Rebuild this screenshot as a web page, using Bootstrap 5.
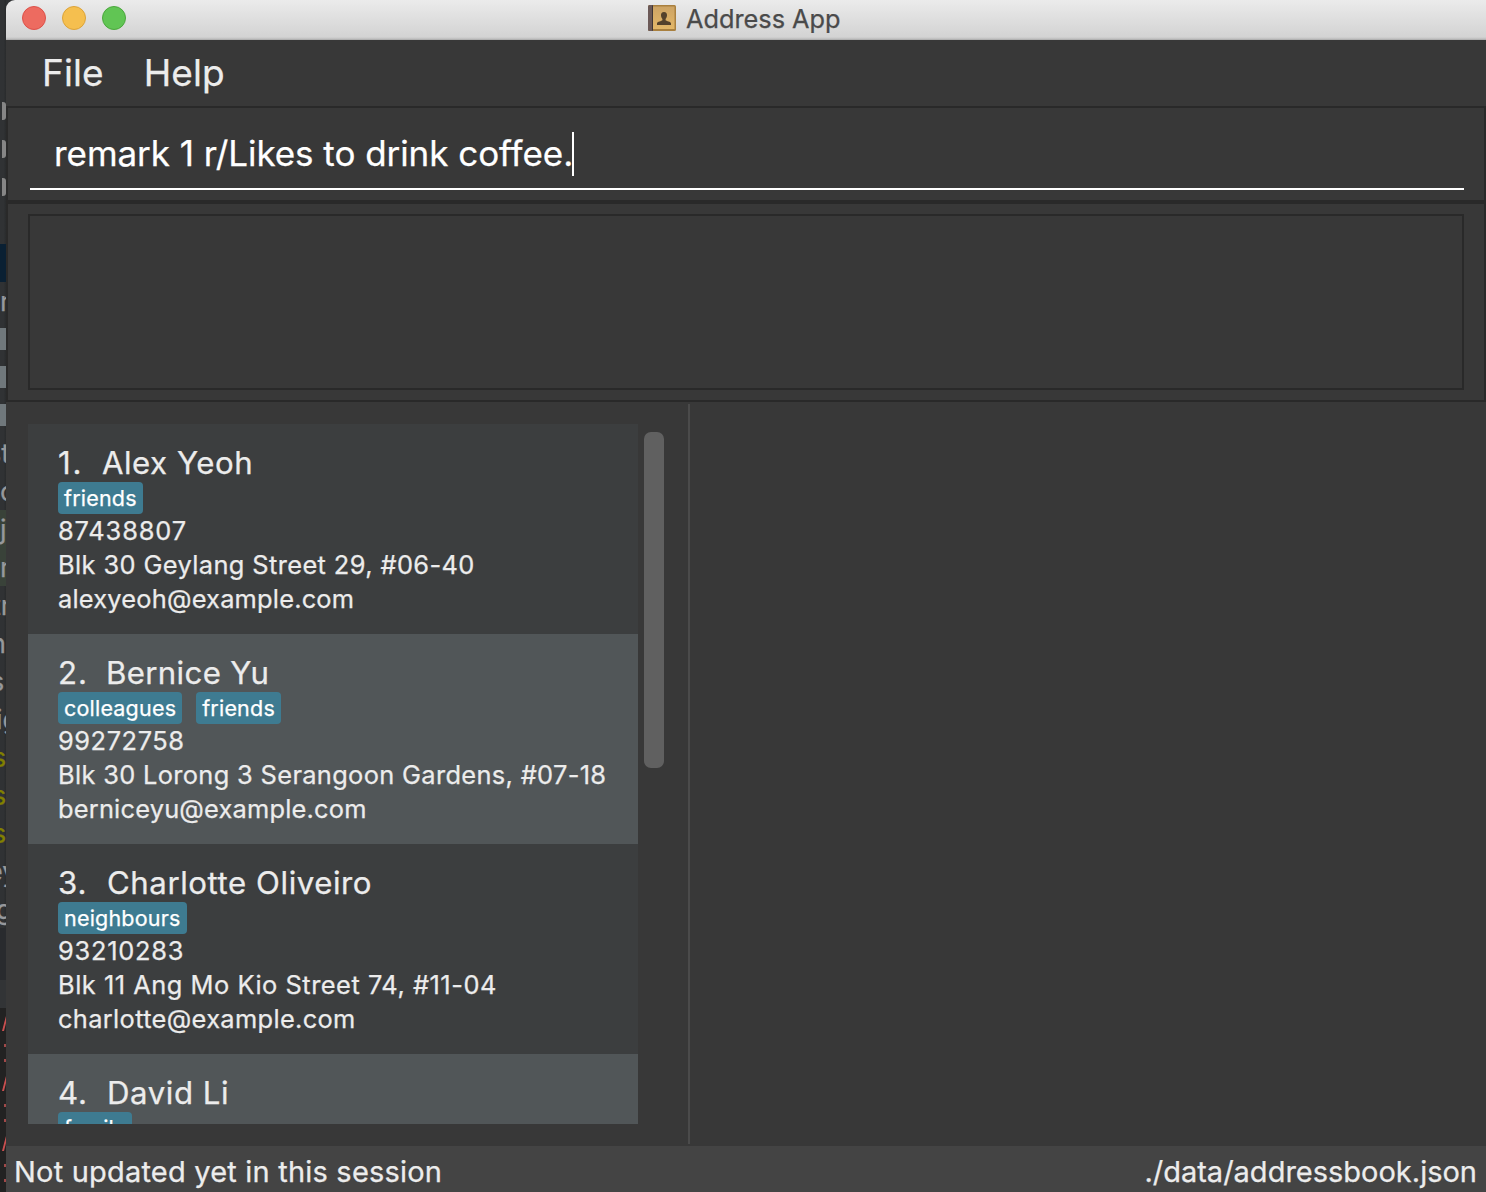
<!DOCTYPE html>
<html lang="en">
<head>
<meta charset="utf-8">
<title>Address App</title>
<link rel="stylesheet" href="https://cdn.jsdelivr.net/npm/bootstrap@5.3.0/dist/css/bootstrap.min.css">
<style>
body{width:1486px;height:1192px;overflow:hidden;background:#2f3133;font-family:Inter,"Liberation Sans",sans-serif;color:#ececec;white-space:nowrap;-webkit-text-stroke:.25px currentColor}
/* sliver of the editor window behind the app */
.backdrop{width:6px;padding-top:92px;background:linear-gradient(90deg,#303234 60%,#292b2c);color:#96989b}
.ln{height:38px;line-height:39px;font-size:27px;overflow:hidden}
.ln.sel{background:#0a2033}
.ln.add{background:#394239}
.ln.key{color:#818000;text-indent:-8px}
.ln.out1{text-indent:-8px}
.ln.out2{text-indent:-13px}
.ln.out3{text-indent:-10px}
.ln.out4{text-indent:-4px}
.blk{width:6px;height:22px;background:#70787c}
.arrow{width:4px;height:18px;margin-left:2px;border-radius:0 3px 3px 0;background:#868686}
.console{height:264px;padding-top:81px;background:linear-gradient(#292b2e 52px,#323436 52px,#323436 80px,#222 80px)}
.err{height:60px;overflow:hidden}
.err svg{display:block}
/* app window */
.win{width:1480px;background:#383838;border-top-left-radius:9px;overflow:hidden}
.titlebar{height:40px;padding:6px 0 0 16px;background:linear-gradient(#ebebeb,#d3d3d3 37px,#bdbdbd 39px,#a5a5a5);color:#4a4a4a}
.dot{width:24px;height:24px;border-radius:50%;border:1px solid}
.dot-r{background:#ed6b60;border-color:#dc5149}
.dot-y{background:#f5bf4f;border-color:#dba33a}
.dot-g{background:#61c554;border-color:#4ba73d}
.caption{font-size:25.3px;line-height:38px;margin:-6px 0 0 10px}
.appicon{margin:-2px 0 0 522px}
.menus{height:66px;font-size:37px;line-height:66px;padding-left:36px;gap:40px;letter-spacing:.1px}
.pane{border:2px solid #292929}
.cmdpane{height:96px;padding:0 20px 0 22px}
.cmd{height:82px;border-bottom:2px solid #fff;color:#fff;font-size:35px;line-height:90px;padding-left:24px;letter-spacing:-.05px}
.caret{width:2px;height:44px;background:#fff;margin:24px 0 0 -1px}
.respane{height:200px;padding:10px 20px}
.result{height:176px;border:2px solid #292929}
.main{height:744px}
.people{width:610px;height:700px;margin:22px 0 0 22px}
.person{height:210px;padding:20px 30px;background:#3c3e3f}
.person:nth-child(even){background:#515658}
.nm{font-size:31.2px;line-height:38px;height:38px}
.num{width:49px}
.num-1{width:44px;letter-spacing:1.8px}
.num-2{width:48px;letter-spacing:1px}
.tagrow{height:32px;gap:14px}
.tagpill{background:#3e7b91;color:#fff;border-radius:4px;height:32px;line-height:32px;padding:0 6px;font-size:21.5px;letter-spacing:.2px}
.info{font-size:25.4px;line-height:34px}
.thumb{width:20px;height:336px;border-radius:7px;background:#606060;margin:30px 0 0 6px}
.split{width:2px;height:740px;background:#4b4b4b;margin:2px 0 0 24px}
.status{height:46px;background:#444;font-size:29px;line-height:52px;padding:0 9px 0 8px}
.ls-2{letter-spacing:.2px}
.ls-3{letter-spacing:.34px}
.ls-4{letter-spacing:.39px}
.ls-5{letter-spacing:.52px}
.ls-6{letter-spacing:.56px}
.ls-7{letter-spacing:.74px}
.ls-8{letter-spacing:.87px}
</style>
<script src="https://cdn.jsdelivr.net/npm/bootstrap@5.3.0/dist/js/bootstrap.bundle.min.js"></script>
</head>
<body class="d-flex m-0">
<div class="backdrop overflow-hidden flex-shrink-0">
  <div class="ln d-flex align-items-center"><div class="arrow"></div></div>
  <div class="ln d-flex align-items-center"><div class="arrow"></div></div>
  <div class="ln d-flex align-items-center"><div class="arrow"></div></div>
  <div class="ln"></div>
  <div class="ln sel"></div>
  <div class="ln">r</div>
  <div class="ln d-flex align-items-center"><div class="blk"></div></div>
  <div class="ln d-flex align-items-center"><div class="blk"></div></div>
  <div class="ln d-flex align-items-center"><div class="blk"></div></div>
  <div class="ln out2">st</div>
  <div class="ln">c</div>
  <div class="ln add">j</div>
  <div class="ln add">r</div>
  <div class="ln out1">tr</div>
  <div class="ln out3">n</div>
  <div class="ln out3">s</div>
  <div class="ln out4">ig</div>
  <div class="ln key">s</div>
  <div class="ln key">s</div>
  <div class="ln key">s</div>
  <div class="ln out2">ey</div>
  <div class="ln out4">g</div>
  <div class="console">
    <div class="err"><svg width="6" height="60"><path d="M2 22L6 7V14L4 22Z" fill="#c95050"/><path d="M4 35h2v3H4zM4 50h2v3H4z" fill="#a14949"/></svg></div>
    <div class="err"><svg width="6" height="60"><path d="M2 22L6 7V14L4 22Z" fill="#c95050"/><path d="M4 35h2v3H4zM4 50h2v3H4z" fill="#a14949"/></svg></div>
    <div class="err"><svg width="6" height="60"><path d="M2 22L6 7V14L4 22Z" fill="#c95050"/><path d="M4 35h2v3H4zM4 50h2v3H4z" fill="#a14949"/></svg></div>
  </div>
</div>
<div class="win d-flex flex-column flex-shrink-0">
  <header class="titlebar d-flex align-items-start">
    <div class="d-flex gap-3"><span class="dot dot-r"></span><span class="dot dot-y"></span><span class="dot dot-g"></span></div>
    <svg class="appicon" width="28" height="28" viewBox="0 0 28 28">
      <defs><linearGradient id="cover" x1="0" y1="0" x2="0" y2="1"><stop offset="0" stop-color="#cda465"/><stop offset="1" stop-color="#e3b768"/></linearGradient></defs>
      <rect x="0" y="1" width="28" height="26" rx="1.5" fill="#a9803f"/>
      <rect x="5" y="2.5" width="21.5" height="22.5" fill="url(#cover)"/>
      <path d="M1.5 1H5V27H1.500Q0 27 0 25.500V2.500Q0 1 1.500 1Z" fill="#6b5957"/>
      <path d="M4.500 1.500V26.500" stroke="#3f3534" stroke-width="1"/>
      <path d="M16 8c-2.200 0-3.200 1.500-3 3.600.1 1.500.7 2.600 1.400 3.300v1.300c-.6 1-5.400 1-5.400 3.300V21h14v-1.500c0-2.300-4.800-2.300-5.400-3.300v-1.300c.7-.7 1.300-1.800 1.400-3.300.2-2.100-.8-3.600-3-3.600Z" fill="#54422c"/>
    </svg>
    <span class="caption">Address App</span>
  </header>
  <nav class="menus d-flex"><span>File</span><span>Help</span></nav>
  <div class="pane cmdpane"><div class="cmd d-flex"><span>remark 1 r/Likes to drink coffee.</span><span class="caret"></span></div></div>
  <div class="pane respane"><div class="result"></div></div>
  <div class="main d-flex">
    <div class="people overflow-hidden">
      <div class="person">
        <div class="nm d-flex"><span class="num-1">1.</span><span class="ls-5">Alex Yeoh</span></div>
        <div class="tagrow d-flex"><span class="tagpill">friends</span></div>
        <div class="info d-flex flex-column"><span class="ls-8">87438807</span><span class="ls-4">Blk 30 Geylang Street 29, #06-40</span><span class="ls-2">alexyeoh@example.com</span></div>
      </div>
      <div class="person">
        <div class="nm d-flex"><span class="num-2">2.</span><span class="ls-3">Bernice Yu</span></div>
        <div class="tagrow d-flex"><span class="tagpill">colleagues</span><span class="tagpill">friends</span></div>
        <div class="info d-flex flex-column"><span class="ls-6">99272758</span><span class="ls-3">Blk 30 Lorong 3 Serangoon Gardens, #07-18</span><span class="ls-2">berniceyu@example.com</span></div>
      </div>
      <div class="person">
        <div class="nm d-flex"><span class="num ls-8">3.</span><span class="ls-6">Charlotte Oliveiro</span></div>
        <div class="tagrow d-flex"><span class="tagpill">neighbours</span></div>
        <div class="info d-flex flex-column"><span class="ls-7">93210283</span><span class="ls-5">Blk 11 Ang Mo Kio Street 74, #11-04</span><span class="ls-3">charlotte@example.com</span></div>
      </div>
      <div class="person">
        <div class="nm d-flex"><span class="num ls-8">4.</span><span class="ls-6">David Li</span></div>
        <div class="tagrow d-flex"><span class="tagpill">family</span></div>
      </div>
    </div>
    <div class="thumb"></div>
    <div class="split"></div>
  </div>
  <footer class="status d-flex justify-content-between"><span class="ls-2">Not updated yet in this session</span><span>./data/addressbook.json</span></footer>
</div>
</body>
</html>
